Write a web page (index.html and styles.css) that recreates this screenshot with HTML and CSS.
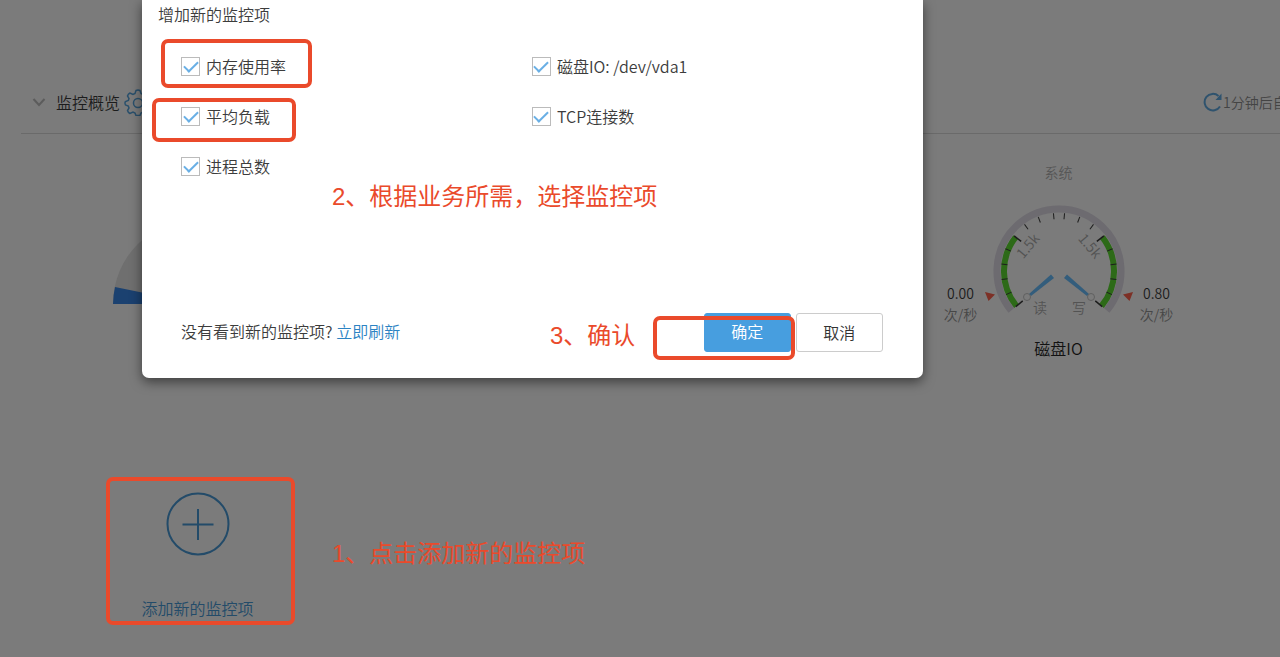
FILE: index.html
```html
<!DOCTYPE html>
<html lang="zh-CN">
<head>
<meta charset="utf-8">
<title>监控概览</title>
<link rel="stylesheet" href="styles.css">
</head>
<body>
<main class="page">
  <header class="overview">
    <svg class="chevron" width="14" height="10" viewBox="0 0 14 10"><path d="M1.500 2 7 8l5.500-6"/></svg>
    <h1 class="overview-title">监控概览</h1>
    <svg class="gear" width="28" height="28" viewBox="0 0 28 28"><path d="M12 2.500Q14 1.500 16 2.500L17 5.500 19 6.500 22 5Q24 6 24.500 8L23 10.500 23.700 12.500 26.500 13.500Q27.500 15 26.500 17L23.700 18 23 20 24.500 22.500Q24 24.500 22 25.500L19 24 17 25 16 27.500H12L11 25 9 24 6 25.500Q4 24.500 3.500 22.500L5 20 4.300 18 1.500 17Q.5 15 1.500 13.500L4.300 12.500 5 10.500 3.500 8Q4 6 6 5L9 6.500 11 5.500z"/><circle cx="14" cy="15" r="4.500"/></svg>
    <div class="refresh">
      <svg width="20" height="20" viewBox="0 0 20 20"><path class="refresh-arc" d="M17 14.500A8.300 8.300 0 1 1 15.500 4"/><path class="refresh-head" d="M18.500 1.500v6.500H12.500z"/></svg>
      <span>1分钟后自</span>
    </div>
  </header>

  <section class="tiles">
    <div class="tile tile-usage">
      <svg width="170" height="86" viewBox="0 0 170 86"><path class="usage-rest" d="M0 86A85 85 0 0 1 170 86z"/><path class="usage-value" d="M0 86A85 85 0 0 1 2 69L85 86z"/></svg>
    </div>
    <div class="tile tile-disk">
      <div class="tile-group">系统</div>
      <div class="dial-row">
        <div class="readout"><b>0.00</b><span>次/秒</span></div>
        <svg class="dial" width="156" height="124" viewBox="-78 -70 156 124">
          <path class="dial-rim" d="M-47.800 39.400A62 62 0 1 1 47.800 39.400"/>
          <path class="dial-band" d="M-42.500 35A55 55 0 0 1-43.300-33.900M42.500 35A55 55 0 0 0 43.300-33.900"/>
          <g id="ticks">
            <path class="tick-major" d="M-56 0h9" transform="rotate(-39.500)"/>
            <path class="tick" d="M-58 0h6" transform="rotate(-24)"/>
            <path class="tick" d="M-58 0h6" transform="rotate(-8.500)"/>
            <path class="tick" d="M-58 0h6" transform="rotate(7)"/>
            <path class="tick" d="M-58 0h6" transform="rotate(22.500)"/>
            <path class="tick-major" d="M-57 0h9" transform="rotate(38)"/>
            <path class="tick" d="M-58 0h6" transform="rotate(53.500)"/>
            <path class="tick" d="M-58 0h6" transform="rotate(69)"/>
            <path class="tick" d="M-58 0h6" transform="rotate(84.500)"/>
            <path class="needle" d="M-5 7l-3-3.500L-30 23l2 2z"/>
            <circle class="pivot" cx="-32" cy="26" r="3.500"/>
            <path class="marker" d="M-74 21l10 2.500-6.500 6.500z"/>
          </g>
          <use href="#ticks" transform="scale(-1 1)"/>
          <text class="dial-scale" transform="translate(-31 -25) rotate(-50)" text-anchor="middle" y="5">1.5k</text>
          <text class="dial-scale" transform="translate(31 -25) rotate(50)" text-anchor="middle" y="5">1.5k</text>
          <text class="dial-name" x="-19" y="42" text-anchor="middle">读</text>
          <text class="dial-name" x="20" y="42" text-anchor="middle">写</text>
        </svg>
        <div class="readout"><b>0.80</b><span>次/秒</span></div>
      </div>
      <div class="tile-name">磁盘IO</div>
    </div>
    <button class="tile tile-add" type="button">
      <svg width="64" height="64" viewBox="0 0 64 64"><circle cx="32" cy="32" r="30.500"/><path d="M32 17v31M16.500 32.500h31"/></svg>
      <span>添加新的监控项</span>
    </button>
  </section>
</main>

<form class="dialog" role="dialog" aria-labelledby="dialog-title">
  <h2 class="dialog-title" id="dialog-title">增加新的监控项</h2>
  <div class="options">
    <label class="option"><input type="checkbox" checked>内存使用率</label>
    <label class="option"><input type="checkbox" checked>磁盘IO: /dev/vda1</label>
    <label class="option"><input type="checkbox" checked>平均负载</label>
    <label class="option"><input type="checkbox" checked>TCP连接数</label>
    <label class="option"><input type="checkbox" checked>进程总数</label>
  </div>
  <footer class="dialog-footer">
    <p class="hint">没有看到新的监控项? <a href="#">立即刷新</a></p>
    <button class="btn btn-ok" type="button">确定</button>
    <button class="btn btn-cancel" type="button">取消</button>
  </footer>
</form>

<div class="notes">
  <div class="frame frame-memory"></div>
  <div class="frame frame-load"></div>
  <div class="frame frame-ok"></div>
  <div class="frame frame-add"></div>
  <p class="note note-add">1、点击添加新的监控项</p>
  <p class="note note-select">2、根据业务所需，选择监控项</p>
  <p class="note note-confirm">3、确认</p>
</div>
</body>
</html>
```

FILE: styles.css
```css
* { box-sizing: border-box; }
html { height: 100%; }
body {
  margin: 0;
  min-height: 100%;
  overflow: hidden;
  background: #7b7b7b;
  color: #3c3c3c;
  font: 350 16px/24px "Noto Sans CJK SC", sans-serif;
}
h1, h2, p { margin: 0; font-size: 16px; font-weight: inherit; }
svg { display: block; flex: none; fill: none; }
button { font: inherit; }

.overview {
  display: flex;
  align-items: center;
  margin-left: 21px;
  padding: 87px 0 16px 11px;
  height: 134px;
  border-bottom: 1px solid #6a6a6a;
}
.chevron { stroke: #5c5c5c; stroke-width: 2; }
.overview-title { margin-left: 10px; color: #1c1c1c; }
.gear { margin-left: 4px; stroke: #2a506c; stroke-width: 1.5; }
.refresh {
  display: flex;
  align-items: center;
  width: 77px;
  margin-left: auto;
  overflow: hidden;
  white-space: nowrap;
  color: #444;
  font-size: 14px;
}
.refresh-arc { stroke: #2f536e; stroke-width: 2; }
.refresh-head { fill: #2f536e; }

.tiles {
  display: grid;
  grid-template-columns: repeat(4, 1fr);
  margin: 26px 78px 0 54px;
}
.tile { display: flex; flex-direction: column; align-items: center; }
.tile-usage { padding-top: 58px; }
.usage-rest { fill: #6f6f6f; }
.usage-value { fill: #1b4170; }
.tile-disk { grid-column: 4; padding-bottom: 132px; }
.tile-group { color: #565656; font-size: 14px; }
.dial-row { display: flex; align-items: flex-end; justify-content: center; margin-top: 17px; }
.readout {
  display: flex;
  flex-direction: column;
  width: 40px;
  text-align: center;
  font-size: 14px;
  line-height: 21px;
  color: #474747;
}
.readout b { color: #1c1c1c; font-weight: inherit; }
.dial-rim { stroke: #6d6b70; stroke-width: 7; }
.dial-band { stroke: #2d6a18; stroke-width: 6; }
.tick { stroke: #1d1d1d; stroke-width: 1; }
.tick-major { stroke: #1d1d1d; stroke-width: 1.5; }
.needle { fill: #335d7c; }
.pivot { stroke: #606060; }
.marker { fill: #7d3026; }
.dial-scale, .dial-name { fill: #535353; font-size: 14px; }
.tile-name { margin-top: 11px; color: #111; }
.tile-add {
  padding: 0;
  border: 0;
  background: none;
  color: #234b69;
  gap: 40px;
}
.tile-add svg { stroke: #234b69; stroke-width: 2; }

.dialog {
  position: absolute;
  top: 0;
  left: 11.1%;
  width: 61%;
  padding: 0 40px 26px 39px;
  border-radius: 0 0 7px 7px;
  background: #fff;
  box-shadow: 0 4px 12px rgba(0, 0, 0, .5);
}
.dialog-title { margin: 0 0 13px -23px; line-height: 28px; }
.options { display: grid; grid-template-columns: 1fr 1fr; }
.option { display: flex; align-items: center; gap: 6px; height: 50px; }
.option input {
  appearance: none;
  display: grid;
  place-items: center;
  width: 19px;
  height: 19px;
  margin: 0;
  border: 1px solid #bbb;
  background: #fff;
}
.option input:checked::after {
  content: "";
  width: 12px;
  height: 6px;
  margin-bottom: 3px;
  border: solid #69afe5;
  border-width: 0 0 2px 2px;
  transform: rotate(-45deg);
}
.dialog-footer { display: flex; align-items: center; margin-top: 122px; }
.hint { margin-right: auto; padding-bottom: 4px; }
.hint a { color: #2c83c3; text-decoration: none; }
.btn {
  width: 87px;
  height: 39px;
  padding: 0 0 2px;
  border: 1px solid #ccc;
  border-radius: 3px;
  background: #fff;
  color: #333;
}
.btn-ok { margin-right: 5px; padding-bottom: 4px; border-color: #479edf; background: #479edf; color: #fff; }

.notes { position: absolute; inset: 0; pointer-events: none; }
.frame { position: absolute; border: 4px solid #ea4a2b; border-radius: 7px; }
.frame-memory { left: 161px; top: 39px; width: 151px; height: 49px; }
.frame-load { left: 152px; top: 98px; width: 144px; height: 44px; }
.frame-ok { left: 653px; top: 316px; width: 142px; height: 44px; }
.frame-add { left: 106px; top: 477px; width: 189px; height: 148px; }
.note {
  position: absolute;
  color: #ea4a2b;
  font: 400 24px/36px "Liberation Sans", "Noto Sans CJK SC", sans-serif;
  white-space: nowrap;
}
.note-add { left: 332px; top: 536px; }
.note-select { left: 332px; top: 179px; }
.note-confirm { left: 550px; top: 318px; }
```
